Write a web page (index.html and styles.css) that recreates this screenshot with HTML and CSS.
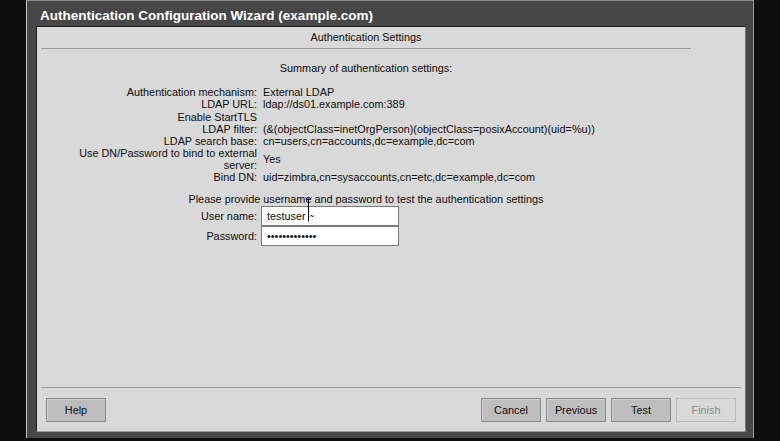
FILE: index.html
```html
<!DOCTYPE html>
<html>
<head>
<meta charset="utf-8">
<title>Authentication Configuration Wizard</title>
<link rel="stylesheet" href="styles.css">
</head>
<body>
<div class="window">
  <div class="titlebar">Authentication Configuration Wizard (example.com)</div>
  <div class="panel">
    <div class="header">Authentication Settings</div>
    <div class="main">
      <div class="summary">Summary of authentication settings:</div>
      <div class="table">
        <div class="row"><div class="label">Authentication mechanism:</div><div class="value">External LDAP</div></div>
        <div class="row"><div class="label">LDAP URL:</div><div class="value">ldap://ds01.example.com:389</div></div>
        <div class="row row-tls"><div class="label">Enable StartTLS</div><div class="value"></div></div>
        <div class="row"><div class="label">LDAP filter:</div><div class="value">(&amp;(objectClass=inetOrgPerson)(objectClass=posixAccount)(uid=%u))</div></div>
        <div class="row"><div class="label">LDAP search base:</div><div class="value">cn=users,cn=accounts,dc=example,dc=com</div></div>
        <div class="row"><div class="label">Use DN/Password to bind to external<br>server:</div><div class="value">Yes</div></div>
        <div class="row"><div class="label">Bind DN:</div><div class="value">uid=zimbra,cn=sysaccounts,cn=etc,dc=example,dc=com</div></div>
      </div>
      <div class="prompt">Please provide username and password to test the authentication settings</div>
      <div class="form">
        <div class="frow"><label class="flabel" for="u">User name:</label><input id="u" class="field" type="text" value="testuser"></div>
        <div class="frow"><label class="flabel" for="p">Password:</label><input id="p" class="field" type="password" value="testpassword1"></div>
      </div>
    </div>
    <div class="footer">
      <button class="btn">Help</button>
      <div class="spacer"></div>
      <button class="btn">Cancel</button>
      <button class="btn">Previous</button>
      <button class="btn">Test</button>
      <button class="btn" disabled>Finish</button>
    </div>
  </div>
</div>
<svg class="ibeam" width="14" height="28" viewBox="0 0 14 28">
  <path d="M2.5 1.5 Q4 4 5.5 3 M8.5 1.5 Q7 4 5.5 3 M5.5 3 V25.5" fill="none" stroke="#000" stroke-width="1"/>
  <path d="M7 20.5 Q8 18.5 9 20 Q10 21.5 11 19.5" fill="none" stroke="#000" stroke-width="0.9"/>
</svg>
</body>
</html>
```
FILE: styles.css
```css
html, body {
  margin: 0;
  padding: 0;
}
body {
  background: #0e0e0e;
  width: 780px;
  height: 441px;
  overflow: hidden;
  position: relative;
  font-family: "Liberation Sans", Arial, sans-serif;
}
.window {
  box-sizing: border-box;
  margin-left: 26px;
  width: 728px;
  height: 438px;
  background: #474747;
  border-left: 1px solid #c8c8c8;
  border-top: 1px solid #8a8a8a;
  border-right: 1px solid #9a9a9a;
  padding: 0 7px 6px 9px;
  display: flex;
  flex-direction: column;
}
.titlebar {
  height: 25px;
  box-sizing: border-box;
  padding: 4px 0 0 4px;
  line-height: 21px;
  font-size: 13.5px;
  font-weight: bold;
  color: #ffffff;
  white-space: nowrap;
}
.panel {
  box-sizing: border-box;
  height: 406px;
  background: #d9d9d9;
  border-top: 1px solid #1c1c1c;
  border-left: 1px solid #1c1c1c;
  border-right: 1px solid #7a7a7a;
  border-bottom: 1px solid #9a9a9a;
  display: flex;
  flex-direction: column;
  font-size: 10.85px;
  color: #0e0e0e;
}
.header {
  margin-left: 4px;
  width: 650px;
  height: 21px;
  line-height: 21px;
  text-align: center;
  border-bottom: 1px solid #9a9a9a;
}
.main {
  flex: 1;
  margin-left: 4px;
  width: 650px;
}
.summary {
  margin-top: 13px;
  line-height: 13px;
  text-align: center;
}
.table {
  margin-top: 11px;
}
.row {
  display: flex;
  align-items: center;
  line-height: 12px;
}
.row-tls {
  min-height: 13px;
}
.label {
  width: 216px;
  flex: none;
  text-align: right;
  white-space: nowrap;
}
.value {
  margin-left: 6px;
  white-space: nowrap;
}
.prompt {
  margin-top: 10px;
  line-height: 13px;
  text-align: center;
}
.frow {
  display: flex;
  align-items: center;
  height: 20px;
}
.flabel {
  width: 216px;
  flex: none;
  text-align: right;
}
.field {
  box-sizing: border-box;
  margin: 0 0 0 4px;
  width: 138px;
  height: 20px;
  padding: 0 4px 0 5px;
  border: 1px solid #7a7a7a;
  border-radius: 0;
  background: #ffffff;
  font-family: "Liberation Sans", Arial, sans-serif;
  font-size: 10.85px;
  color: #0e0e0e;
  outline: none;
}
.footer {
  margin: 0 4px;
  border-top: 1px solid #9a9a9a;
  padding: 10px 5px 9px 5px;
  display: flex;
  gap: 5px;
}
.spacer {
  flex: 1;
}
.btn {
  box-sizing: border-box;
  width: 60px;
  height: 24px;
  margin: 0;
  padding: 0;
  background: #bebebe;
  border: 1px solid #8a8a8a;
  box-shadow: inset 1px 1px 0 #d0d0d0;
  border-radius: 0;
  font-family: "Liberation Sans", Arial, sans-serif;
  font-size: 10.85px;
  color: #0e0e0e;
}
.btn:disabled {
  background: #d9d9d9;
  border-color: #bdbdbd;
  box-shadow: none;
  color: #8a8a8a;
}
.ibeam {
  position: absolute;
  left: 303px;
  top: 196px;
}
```
